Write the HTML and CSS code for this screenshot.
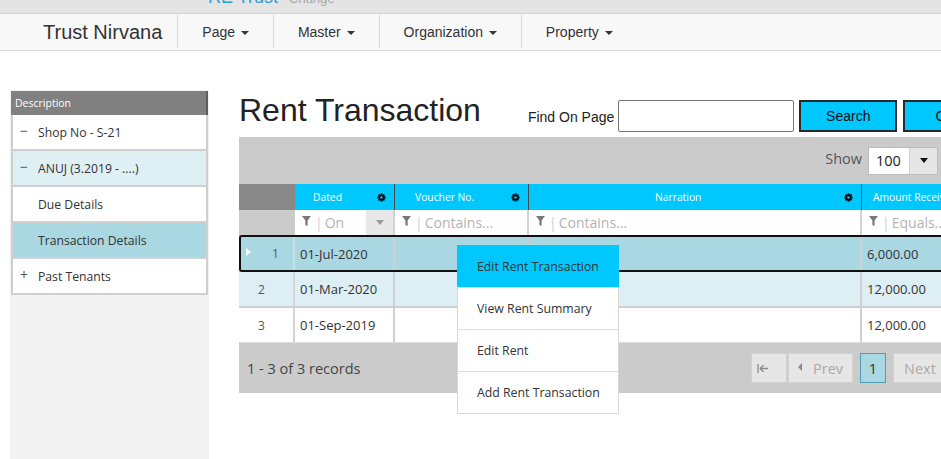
FILE: index.html
```html
<!DOCTYPE html>
<html>
<head>
<meta charset="utf-8">
<title>Rent Transaction</title>
<link rel="stylesheet" href="styles.css">
</head>
<body>
<div class="topstrip">
  <div class="tenantbar"><span class="tenant">RE Trust</span><span class="change">Change</span></div>
</div>
<nav class="navbar">
  <div class="brand">Trust Nirvana</div>
  <div class="navitem"><span>Page <b class="caret"></b></span></div>
  <div class="navitem"><span>Master <b class="caret"></b></span></div>
  <div class="navitem"><span>Organization <b class="caret"></b></span></div>
  <div class="navitem last"><span>Property <b class="caret"></b></span></div>
</nav>

<div class="layout">
  <aside class="sidebar">
    <div class="side-head">Description</div>
    <ul class="tree">
      <li class="node"><span class="sign">&minus;</span>Shop No - S-21</li>
      <li class="node alt"><span class="sign">&minus;</span>ANUJ (3.2019 - ....)</li>
      <li class="node"><span class="sign"></span>Due Details</li>
      <li class="node active"><span class="sign"></span>Transaction Details</li>
      <li class="node"><span class="sign">+</span>Past Tenants</li>
    </ul>
  </aside>

  <main class="main">
    <div class="main-head">
      <h1 class="title">Rent Transaction</h1>
      <div class="find">
        <label class="find-label">Find On Page</label>
        <input class="find-input" type="text">
        <button class="btn">Search</button>
        <button class="btn btn2">Clear</button>
      </div>
    </div>

    <div class="grid">
      <div class="grid-toolbar">
        <span class="show">Show</span>
        <div class="pagesize"><span class="val">100</span><span class="dd"><i class="tri-down"></i></span></div>
      </div>

      <div class="gr ghead">
        <div class="hc ind"></div>
        <div class="hc"><span class="ht pad18">Dated</span><svg class="gear" viewBox="0 0 16 16"><g fill="#000"><circle cx="8" cy="8" r="5.3"/><rect x="6.4" y="0.6" width="3.2" height="14.8"/><rect x="6.4" y="0.6" width="3.2" height="14.8" transform="rotate(45 8 8)"/><rect x="6.4" y="0.6" width="3.2" height="14.8" transform="rotate(90 8 8)"/><rect x="6.4" y="0.6" width="3.2" height="14.8" transform="rotate(135 8 8)"/></g><circle cx="8" cy="8" r="2.4" fill="#00c8ff"/></svg></div>
        <div class="hc"><span class="ht pad20">Voucher No.</span><svg class="gear" viewBox="0 0 16 16"><g fill="#000"><circle cx="8" cy="8" r="5.3"/><rect x="6.4" y="0.6" width="3.2" height="14.8"/><rect x="6.4" y="0.6" width="3.2" height="14.8" transform="rotate(45 8 8)"/><rect x="6.4" y="0.6" width="3.2" height="14.8" transform="rotate(90 8 8)"/><rect x="6.4" y="0.6" width="3.2" height="14.8" transform="rotate(135 8 8)"/></g><circle cx="8" cy="8" r="2.4" fill="#00c8ff"/></svg></div>
        <div class="hc"><span class="ht pad126">Narration</span><svg class="gear" viewBox="0 0 16 16"><g fill="#000"><circle cx="8" cy="8" r="5.3"/><rect x="6.4" y="0.6" width="3.2" height="14.8"/><rect x="6.4" y="0.6" width="3.2" height="14.8" transform="rotate(45 8 8)"/><rect x="6.4" y="0.6" width="3.2" height="14.8" transform="rotate(90 8 8)"/><rect x="6.4" y="0.6" width="3.2" height="14.8" transform="rotate(135 8 8)"/></g><circle cx="8" cy="8" r="2.4" fill="#00c8ff"/></svg></div>
        <div class="hc"><span class="ht pad11">Amount Received</span></div>
      </div>

      <div class="gr gfilter">
        <div class="fc ind"></div>
        <div class="fc dated">
          <svg class="funnel" viewBox="0 0 8 9"><path d="M0 0H8L5 4V9L3 8V4Z" fill="#777"/></svg><span class="bar">|</span><span class="ph short">On</span>
          <span class="fdd"><i class="tri-down grey"></i></span>
        </div>
        <div class="fc"><svg class="funnel" viewBox="0 0 8 9"><path d="M0 0H8L5 4V9L3 8V4Z" fill="#777"/></svg><span class="bar">|</span><span class="ph">Contains...</span></div>
        <div class="fc"><svg class="funnel" viewBox="0 0 8 9"><path d="M0 0H8L5 4V9L3 8V4Z" fill="#777"/></svg><span class="bar">|</span><span class="ph">Contains...</span></div>
        <div class="fc"><svg class="funnel" viewBox="0 0 8 9"><path d="M0 0H8L5 4V9L3 8V4Z" fill="#777"/></svg><span class="bar">|</span><span class="ph">Equals...</span></div>
      </div>

      <div class="gr drow sel">
        <div class="dc ind"><i class="tri-right"></i><span class="num">1</span></div>
        <div class="dc">01-Jul-2020</div>
        <div class="dc"></div>
        <div class="dc"></div>
        <div class="dc">6,000.00</div>
      </div>
      <div class="gr drow alt">
        <div class="dc ind"><span class="num n2">2</span></div>
        <div class="dc">01-Mar-2020</div>
        <div class="dc"></div>
        <div class="dc"></div>
        <div class="dc">12,000.00</div>
      </div>
      <div class="gr drow last">
        <div class="dc ind"><span class="num n2">3</span></div>
        <div class="dc">01-Sep-2019</div>
        <div class="dc"></div>
        <div class="dc"></div>
        <div class="dc">12,000.00</div>
      </div>

      <div class="grid-footer">
        <span class="records">1 - 3 of 3 records</span>
        <div class="pager">
          <span class="pbtn first"><svg viewBox="0 0 11 9" width="11" height="9"><path d="M1 0V9M3 4.5H11M3 4.5L6.5 1.2M3 4.5L6.5 7.8" stroke="#8a8a8a" stroke-width="1.3" fill="none"/></svg></span>
          <span class="pbtn prev"><i class="tri-left"></i>Prev</span>
          <span class="pbtn cur">1</span>
          <span class="pbtn next">Next</span>
          <span class="pbtn lastb">Last</span>
        </div>
      </div>
    </div>

    <ul class="ctx">
      <li class="ctx-item on">Edit Rent Transaction</li>
      <li class="ctx-item">View Rent Summary</li>
      <li class="ctx-item">Edit Rent</li>
      <li class="ctx-item">Add Rent Transaction</li>
    </ul>
  </main>
</div>
</body>
</html>
```

FILE: styles.css
```css
* { box-sizing: border-box; margin: 0; padding: 0; }
html, body { height: 100%; overflow: hidden; }
body {
  font-family: "Liberation Sans", Arial, sans-serif;
  background: #fff;
  color: #333;
  width: 941px;
}

/* top strip */
.topstrip {
  height: 14px;
  background: #e4e4e4;
  border-bottom: 1px solid #d2d2d2;
  overflow: hidden;
}
.tenantbar {
  margin-top: -12px;
  margin-left: 208px;
  line-height: 18px;
  white-space: nowrap;
}
.tenant { font-size: 18px; color: #2c9fdb; }
.change { font-size: 13px; color: #a8a8a8; margin-left: 11px; }

/* navbar */
.navbar {
  display: flex;
  height: 37px;
  background: #f8f8f8;
  border-bottom: 1px solid #d8d8d8;
}
.brand {
  font-size: 20px;
  color: #333;
  padding: 0 15px 0 43px;
  display: flex;
  align-items: center;
  white-space: nowrap;
}
.navitem {
  display: flex;
  align-items: center;
  padding: 0 24px;
  font-size: 14px;
  color: #333;
  border-left: 1px solid #d9d9d9;
  margin: 1px 0 2px;
  white-space: nowrap;
}
.caret {
  display: inline-block;
  width: 0; height: 0;
  border-top: 4px solid #333;
  border-left: 4px solid transparent;
  border-right: 4px solid transparent;
  margin-left: 2px;
  vertical-align: middle;
}

/* layout */
.layout {
  display: flex;
  margin-top: 39px;
}

/* sidebar */
.sidebar {
  flex: none;
  width: 199px;
  height: 380px;
  margin-left: 10px;
  background: #f2f2f2;
  padding: 1px 1px 0 1px;
  font-family: "Open Sans", "Noto Sans", sans-serif;
}
.side-head {
  height: 24px;
  line-height: 24px;
  background: #808080;
  color: #fff;
  font-size: 10.5px;
  padding-left: 4px;
  border-right: 2px solid #5e5e5e;
}
.tree {
  list-style: none;
  border-left: 2px solid #cfcfcf;
  border-right: 2px solid #cfcfcf;
  background: #fff;
}
.node {
  height: 36px;
  border-bottom: 2px solid #d0d0d0;
  display: flex;
  align-items: center;
  font-size: 12.2px;
  color: #333;
  padding-left: 7px;
  white-space: nowrap;
}
.node.alt { background: #dff0f4; }
.node.active { background: #a9d7e2; }
.sign {
  width: 18px;
  flex: none;
  color: #555;
  font-size: 14px;
  line-height: 1;
  position: relative;
  top: -1px;
}

/* main */
.main {
  flex: none;
  width: 760px;
  margin-left: 30px;
  position: relative;
}
.main-head {
  display: flex;
  align-items: flex-start;
  height: 47px;
  white-space: nowrap;
}
.title {
  flex: none;
  font-family: "Liberation Sans", Arial, sans-serif;
  font-size: 32px;
  line-height: 37px;
  font-weight: normal;
  color: #222;
  margin-top: 2px;
}
.find {
  flex: none;
  display: flex;
  align-items: center;
  height: 32px;
  margin-top: 10px;
  margin-left: 47px;
}
.find-label {
  flex: none;
  font-size: 14px;
  color: #222;
  margin-top: 1px;
}
.find-input {
  flex: none;
  width: 176px;
  height: 32px;
  margin-left: 4px;
  border: 1px solid #767676;
  border-radius: 2px;
  background: #fff;
}
.btn {
  flex: none;
  width: 98px;
  height: 32px;
  margin-left: 5px;
  background: #00c8ff;
  border: 2px solid #2a2a2a;
  font-family: "Liberation Sans", Arial, sans-serif;
  font-size: 14px;
  color: #111;
}
.btn2 { margin-left: 6px; }

/* grid */
.grid {
  width: 760px;
  font-family: "Open Sans", "Noto Sans", sans-serif;
}
.grid-toolbar {
  height: 47px;
  background: #cbcbcb;
  display: flex;
  align-items: center;
  justify-content: flex-end;
  padding-right: 61px;
}
.show { font-size: 14.5px; color: #555; margin-right: 6px; margin-top: -4px; }
.pagesize {
  display: flex;
  width: 70px;
  height: 28px;
  border: 1px solid #bdbdbd;
  background: #fff;
}
.val {
  width: 40px;
  padding-left: 7px;
  font-size: 14.5px;
  line-height: 26px;
  color: #222;
}
.dd {
  flex: 1;
  background: #e6e6e6;
  border-left: 1px solid #cfcfcf;
  display: flex;
  align-items: center;
  justify-content: center;
}
.tri-down {
  display: block;
  width: 0; height: 0;
  border-top: 5px solid #111;
  border-left: 4px solid transparent;
  border-right: 4px solid transparent;
}
.tri-down.grey { border-top-color: #9a9a9a; }

.gr {
  display: grid;
  grid-template-columns: 56px 100px 134px 333px 137px;
}
.ghead { height: 26px; }
.hc {
  background: #00c8ff;
  border-right: 1px solid #4a4a4a;
  display: flex;
  align-items: center;
  justify-content: space-between;
  color: #fff;
  font-size: 10.3px;
  overflow: hidden;
}
.hc.ind { background: #898989; border-right: none; }
.ht { white-space: nowrap; }
.pad18 { padding-left: 18px; }
.pad20 { padding-left: 20px; }
.pad126 { padding-left: 126px; }
.pad11 { padding-left: 11px; }
.gear { width: 9px; height: 9px; margin-right: 8px; flex: none; }

.gfilter { height: 25px; }
.fc {
  background: #fff;
  border-right: 2px solid #d3d3d3;
  display: flex;
  align-items: center;
  padding-left: 7px;
  overflow: hidden;
  white-space: nowrap;
}
.fc.ind { background: #cbcbcb; border-right: none; }
.funnel { width: 9px; height: 10px; flex: none; margin-top: -3px; }
.bar { color: #cfcfcf; font-size: 14px; margin: 0 2px 0 4px; }
.ph { color: #b3b3b3; font-size: 14px; }
.ph.short { width: 19px; overflow: hidden; }
.fdd {
  margin-left: auto;
  width: 27px;
  height: 100%;
  background: #e8e8e8;
  display: flex;
  align-items: center;
  justify-content: center;
}

.drow {
  height: 36px;
  border-bottom: 2px solid #d0d0d0;
  font-size: 13px;
  color: #333;
  white-space: nowrap;
}
.drow.sel {
  height: 37px;
  background: #a9d7e2;
  border-bottom: none;
  position: relative;
}
.drow.sel::after {
  content: "";
  position: absolute;
  inset: 0 -4px 0 0;
  border: 2px solid #111;
  border-radius: 3px;
  pointer-events: none;
}
.drow.alt { background: #ddeff4; }
.drow.last { height: 35px; background: #fff; border-bottom: 1px solid #dcdcdc; }
.dc {
  border-right: 2px solid #d0d0d0;
  display: flex;
  align-items: center;
  padding-left: 5px;
}
.dc:last-child { border-right: none; }
.dc.ind { padding-left: 7px; border-right-color: #d4d4d4; }
.drow.sel .dc.ind { border-right-color: #c9dfe5; }
.tri-right {
  display: block;
  width: 0; height: 0;
  border-left: 5px solid #fff;
  border-top: 4px solid transparent;
  border-bottom: 4px solid transparent;
  margin-top: -4px;
}
.num { font-size: 12px; color: #555; margin-left: 21px; }
.num.n2 { margin-left: 12px; }

.grid-footer {
  height: 50px;
  background: #cbcbcb;
  display: flex;
  align-items: center;
  padding-left: 8px;
  white-space: nowrap;
}
.records {
  flex: none;
  width: 504px;
  font-size: 14.5px;
  color: #444;
}
.pager { flex: none; display: flex; align-items: center; }
.pbtn {
  flex: none;
  height: 30px;
  background: #e6e6e6;
  border: 1px solid #d2d2d2;
  display: flex;
  align-items: center;
  justify-content: center;
  font-size: 14.5px;
  color: #aaa;
}
.first { width: 36px; justify-content: flex-start; padding-left: 5px; }
.prev { width: 65px; margin-left: 1px; justify-content: flex-start; padding-left: 9px; }
.tri-left {
  display: block;
  width: 0; height: 0;
  border-right: 4px solid #8a8a8a;
  border-top: 4px solid transparent;
  border-bottom: 4px solid transparent;
  margin-right: 11px;
  margin-top: -3px;
}
.cur {
  width: 26px;
  margin-left: 7px;
  background: #a9d7e2;
  border-color: #4e9db3;
  color: #333;
}
.next { width: 60px; margin-left: 7px; justify-content: flex-start; padding-left: 10px; }
.lastb { width: 55px; margin-left: 2px; }

/* context menu */
.ctx {
  position: absolute;
  left: 218px;
  top: 155px;
  width: 162px;
  list-style: none;
  background: #fff;
  border: 1px solid #d8d8d8;
  border-top: none;
  font-family: "Open Sans", "Noto Sans", sans-serif;
}
.ctx-item {
  height: 42px;
  display: flex;
  align-items: center;
  padding-left: 19px;
  font-size: 12.3px;
  color: #333;
  border-top: 1px solid #dedede;
}
.ctx-item.on {
  background: #00c8ff;
  border-top: none;
  margin: 0 -1px;
  padding-left: 20px;
}
```
